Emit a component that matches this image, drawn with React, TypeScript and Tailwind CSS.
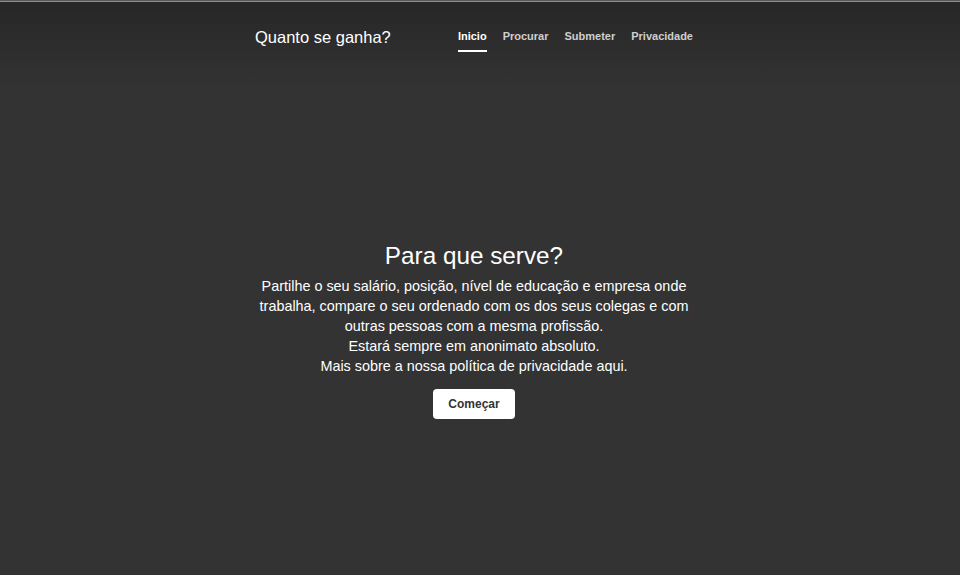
export default function App() {
  const links = ['Inicio', 'Procurar', 'Submeter', 'Privacidade']

  return (
    <div
      className="min-h-screen w-full bg-[#333333] bg-[linear-gradient(to_bottom,#272727_0px,#333333_90px)] text-white"
      style={{ fontFamily: '"Liberation Sans", Arial, sans-serif' }}
    >
      {/* top edge */}
      <div className="h-px bg-[#5a5a5a]" />
      <div className="h-px bg-[#8e8e8e]" />

      {/* ── Header ─────────────────────────────────────────── */}
      <header className="flex justify-center pr-[12px]">
        <div className="flex w-[438px] items-start justify-between">
          <h3 className="mt-[23px] text-[16.5px] leading-[24px] font-normal">Quanto se ganha?</h3>
          <nav className="mt-[27px] flex gap-[16px]">
            {links.map((l, i) => (
              <a
                key={l}
                href="#"
                className={
                  i === 0
                    ? 'border-b-2 border-white pb-[6px] text-[11px] leading-[15px] font-bold text-white'
                    : 'border-b-2 border-transparent pb-[6px] text-[11px] leading-[15px] font-bold text-[#cfcfcf]'
                }
              >
                {l}
              </a>
            ))}
          </nav>
        </div>
      </header>

      {/* ── Cover ──────────────────────────────────────────── */}
      <main className="mt-[189px] flex justify-center pr-[12px]">
        <div className="flex w-[438px] flex-col items-center text-center">
          <h1 className="text-[24.3px] leading-[29px] font-normal">Para que serve?</h1>
          <p className="mt-[6px] text-[14.4px] leading-[20px]">
            Partilhe o seu salário, posição, nível de educação e empresa onde trabalha, compare o seu
            ordenado com os dos seus colegas e com outras pessoas com a mesma profissão.
            <br />
            Estará sempre em anonimato absoluto.
            <br />
            Mais sobre a nossa política de privacidade aqui.
          </p>
          <a
            href="#"
            className="mt-[13px] rounded-[4px] bg-white px-[15px] py-[7px] text-[12px] leading-[16px] font-bold text-[#333333]"
          >
            Começar
          </a>
        </div>
      </main>
    </div>
  )
}
